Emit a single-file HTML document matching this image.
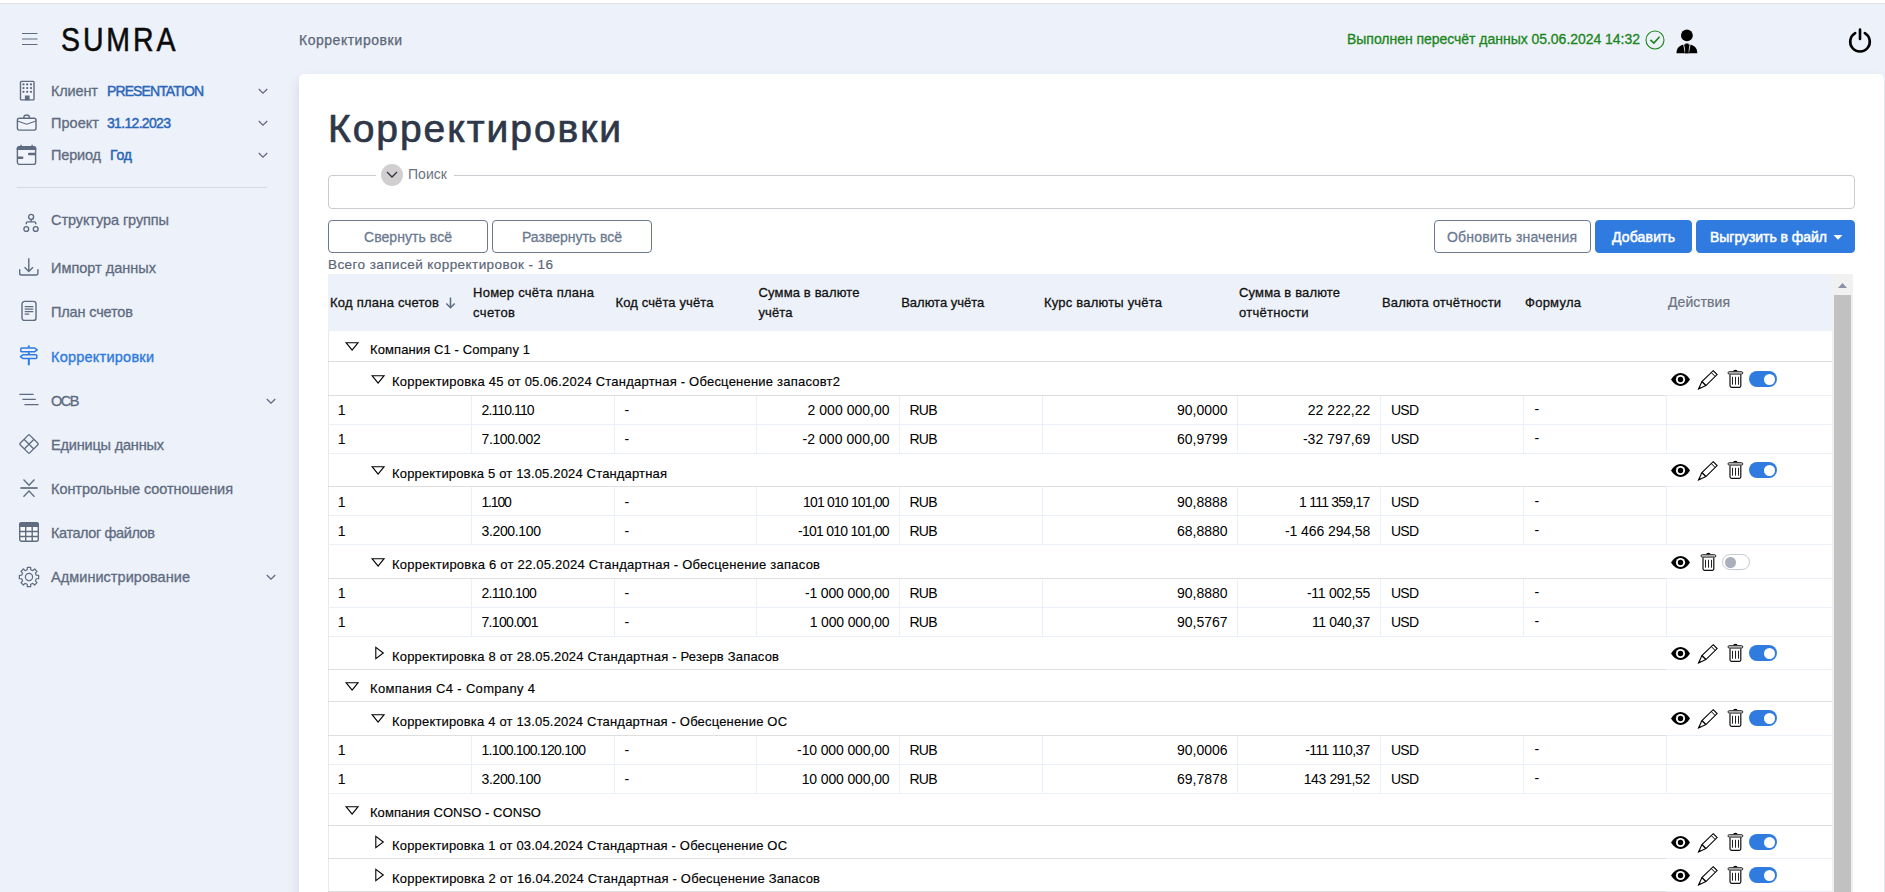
<!DOCTYPE html><html lang="ru"><head><meta charset="utf-8"><title>Корректировки</title><style>
*{box-sizing:border-box;margin:0;padding:0}
html,body{width:1885px;height:892px;overflow:hidden}
body{background:#edf1f9;font-family:"Liberation Sans",sans-serif;position:relative;color:#000}
.t{position:absolute;white-space:nowrap;font-size:14px}
.abs{position:absolute}
.topstrip{position:absolute;left:0;top:0;width:1885px;height:3px;background:#fff}
.topline{position:absolute;left:0;top:3px;width:1885px;height:1px;background:#e0e0de}
.card{position:absolute;left:299px;top:74px;width:1585px;height:830px;background:#fff;border-radius:5px 5px 0 0;box-shadow:0 6px 12px rgba(90,105,135,.2)}
.logo{font-size:33.5px;letter-spacing:3.4px;color:#0b0b0b;-webkit-text-stroke:.55px #0b0b0b;transform:scaleX(.85);transform-origin:0 50%}
.crumb{color:#5b6678;font-size:14px;-webkit-text-stroke:.25px #5b6678}
.status{color:#1a851a;font-size:14px;-webkit-text-stroke:.3px #1a851a}
.sl{color:#5e6b80;font-size:14.5px;-webkit-text-stroke:.3px #5e6b80}
.sv{color:#2a66b8;font-size:14px;-webkit-text-stroke:.45px #2a66b8}
.mi{color:#5e6b80;font-size:14.5px;-webkit-text-stroke:.3px #5e6b80}
.mi.act{color:#2f7be0;-webkit-text-stroke:.35px #2f7be0}
.h1{font-size:39px;color:#2d3748;-webkit-text-stroke:.7px #2d3748}
.leg{color:#6b7280;font-size:14px}
.btn{position:absolute;top:220px;height:32.600px;border-radius:4px;border:1px solid #6b7a90;background:#fff}
.btn.blue{background:#2f7be0;border-color:#2f7be0}
.bt{color:#6b7a90;font-size:14px;-webkit-text-stroke:.3px #6b7a90}
.bw{color:#fff;font-size:14px;-webkit-text-stroke:.5px #fff}
.cnt{color:#5b6678;font-size:13.5px;-webkit-text-stroke:.2px #5b6678}
.th{color:#111;font-size:13px;-webkit-text-stroke:.3px #111}
.thg{color:#6b7280;font-size:14px;-webkit-text-stroke:.2px #6b7280}
.td{color:#000;font-size:14px}
.gr{color:#000;font-size:13px;-webkit-text-stroke:.15px #000}
.hl{position:absolute;height:1px;background:#e6ebf5}
.hl2{position:absolute;height:1px;background:#dcdfe4}
.vl{position:absolute;width:1px;background:#e6ebf5}
svg{position:absolute;overflow:visible}
</style></head><body>
<div class="topstrip"></div><div class="topline"></div>
<svg style="left:22px;top:31px" width="16" height="16" viewBox="0 0 16 16"><path d="M0 2.5h15.5M0 8h15.5M0 13.5h15.5" stroke="#5e6b80" stroke-width="1.2" fill="none"/></svg>
<span id="t1" class="t logo" style="top:19.80px;line-height:40px;left:61.00px;">SUMRA</span>
<span id="t2" class="t crumb" style="top:30.00px;line-height:20px;left:299.00px;letter-spacing:0.518px;">Корректировки</span>
<span id="t3" class="t status" style="top:29.00px;line-height:20px;left:1347.00px;letter-spacing:-0.032px;">Выполнен пересчёт данных 05.06.2024 14:32</span>
<svg style="left:1645px;top:29.500px" width="20" height="20" viewBox="0 0 20 20"><circle cx="10" cy="10" r="9" fill="none" stroke="#1a851a" stroke-width="1.100"/><path d="M5.400 9.800l3.500 3.300 5.700-6.300" fill="none" stroke="#1a851a" stroke-width="1.600"/></svg>
<svg style="left:1675.500px;top:28.500px" width="22" height="25" viewBox="0 0 22 25"><circle cx="10.900" cy="6.400" r="5.900" fill="#000"/><path d="M0.500 24.300c0-5 2.500-8.600 10.400-9.300 7.900 0.700 10.400 4.300 10.400 9.300z" fill="#000"/><path d="M7.600 15.100l1.700 8.800M14.200 15.100l-1.700 8.800" stroke="#edf1f9" stroke-width="0.900" fill="none"/><path d="M9.300 14.600h3.200l-0.700 2.200 1 7.500h-3.800l1-7.500z" fill="#000"/></svg>
<svg style="left:1848px;top:27px" width="24" height="25" viewBox="0 0 24 25"><path d="M7.200 6.200A9.800 9.800 0 1 0 16.800 6.200" fill="none" stroke="#000" stroke-width="2.600" stroke-linecap="round"/><path d="M12 2.500v9.500" stroke="#000" stroke-width="2.600" stroke-linecap="round"/></svg>
<svg style="left:19px;top:80.400px" width="17" height="21" viewBox="0 0 17 21"><rect x="1.500" y="1.400" width="13.500" height="18.500" rx="0.800" fill="#f1f4fa" stroke="#5e6b80" stroke-width="1.400"/><circle cx="4.5" cy="4.4" r="1.150" fill="#5e6b80"/><circle cx="4.5" cy="8.1" r="1.150" fill="#5e6b80"/><circle cx="4.5" cy="11.8" r="1.150" fill="#5e6b80"/><circle cx="8.2" cy="4.4" r="1.150" fill="#5e6b80"/><circle cx="8.2" cy="8.1" r="1.150" fill="#5e6b80"/><circle cx="8.2" cy="11.8" r="1.150" fill="#5e6b80"/><circle cx="12.0" cy="4.4" r="1.150" fill="#5e6b80"/><circle cx="12.0" cy="8.1" r="1.150" fill="#5e6b80"/><circle cx="12.0" cy="11.8" r="1.150" fill="#5e6b80"/><rect x="5.900" y="15.500" width="4.700" height="4.800" fill="#5e6b80"/></svg>
<span id="t4" class="t sl" style="top:81.00px;line-height:20px;left:51.00px;letter-spacing:-0.146px;">Клиент</span>
<span id="t5" class="t sv" style="top:81.00px;line-height:20px;left:107.00px;letter-spacing:-0.893px;">PRESENTATION</span>
<svg style="left:258px;top:88px" width="10" height="7" viewBox="0 0 10 7"><path d="M0.800 1l4.200 4.200L9.200 1" fill="none" stroke="#5e6b80" stroke-width="1.300"/></svg>
<svg style="left:16.300px;top:113.900px" width="21" height="18" viewBox="0 0 21 18"><g fill="none" stroke="#5e6b80" stroke-width="1.400"><path d="M8 4.200V2.600a1.300 1.300 0 0 1 1.300-1.300h2.600a1.300 1.300 0 0 1 1.300 1.300v1.600"/><rect x="1.400" y="4.200" width="18.600" height="11.900" rx="1.800" fill="#f1f4fa"/><path d="M1.400 7l9.300 3.200 9.300-3.200" stroke-width="1.200"/></g></svg>
<span id="t6" class="t sl" style="top:113.00px;line-height:20px;left:51.00px;letter-spacing:0.047px;">Проект</span>
<span id="t7" class="t sv" style="top:113.00px;line-height:20px;left:107.00px;letter-spacing:-0.675px;">31.12.2023</span>
<svg style="left:258px;top:120px" width="10" height="7" viewBox="0 0 10 7"><path d="M0.800 1l4.200 4.200L9.200 1" fill="none" stroke="#5e6b80" stroke-width="1.300"/></svg>
<svg style="left:16.300px;top:144px" width="21" height="22" viewBox="0 0 21 22"><rect x="1.400" y="2.600" width="18.200" height="17.800" rx="2.200" fill="#f1f4fa" stroke="#5e6b80" stroke-width="1.400"/><path d="M0.700 4.700a2.800 2.800 0 0 1 2.800-2.800h14a2.800 2.800 0 0 1 2.800 2.800v1.300H0.700z" fill="#5e6b80"/><path d="M5 0.700v2M16.100 0.700v2" stroke="#5e6b80" stroke-width="1.400"/><rect x="12" y="8.800" width="7.600" height="2.400" rx="1" fill="#5e6b80"/><rect x="1.400" y="12.400" width="6" height="2.500" rx="1" fill="#5e6b80"/></svg>
<span id="t8" class="t sl" style="top:145.00px;line-height:20px;left:51.00px;letter-spacing:-0.172px;">Период</span>
<span id="t9" class="t sv" style="top:145.00px;line-height:20px;left:110.00px;letter-spacing:-0.147px;">Год</span>
<svg style="left:258px;top:152px" width="10" height="7" viewBox="0 0 10 7"><path d="M0.800 1l4.200 4.200L9.200 1" fill="none" stroke="#5e6b80" stroke-width="1.300"/></svg>
<div class="abs" style="left:17px;top:187px;width:250px;height:1px;background:#d3d9e6"></div>
<svg style="left:23px;top:213px" width="16" height="20" viewBox="0 0 16 20"><g fill="none" stroke="#5e6b80" stroke-width="1.400"><circle cx="8.100" cy="3.900" r="2.500"/><circle cx="3.300" cy="16" r="2.400"/><circle cx="12.700" cy="16" r="2.400"/><path d="M8.100 6.500v2.400M3.300 11.200v-1.300a1 1 0 0 1 1-1h7.400a1 1 0 0 1 1 1v1.300"/></g></svg>
<span id="t10" class="t mi" style="top:210.00px;line-height:20px;left:51.00px;letter-spacing:-0.093px;">Структура группы</span>
<svg style="left:18px;top:257px" width="22" height="20" viewBox="0 0 22 20"><g fill="none" stroke="#5e6b80" stroke-width="1.400"><path d="M10.800 1.200v13M6.600 10.200l4.200 4.200 4.200-4.200"/><path d="M1.700 12.200v4a1.800 1.800 0 0 0 1.800 1.800h14.600a1.800 1.800 0 0 0 1.800-1.800v-4"/></g></svg>
<span id="t11" class="t mi" style="top:258.00px;line-height:20px;left:51.00px;letter-spacing:0.005px;">Импорт данных</span>
<svg style="left:21px;top:300px" width="16" height="22" viewBox="0 0 16 22"><rect x="1" y="1.400" width="14" height="19" rx="2.500" fill="none" stroke="#5e6b80" stroke-width="1.400"/><path d="M3.700 6.600h8.600M3.700 9.100h8.600M3.700 11.600h8.600M3.700 14.100h4.500" stroke="#5e6b80" stroke-width="1.300"/></svg>
<span id="t12" class="t mi" style="top:302.00px;line-height:20px;left:51.00px;letter-spacing:-0.147px;">План счетов</span>
<svg style="left:19px;top:345px" width="20" height="21" viewBox="0 0 20 21"><path d="M9.800 0.600v2M9.800 7.200v2M9.800 13.800v6.500" stroke="#2f7be0" stroke-width="2"/><g fill="none" stroke="#2f7be0" stroke-width="1.500" stroke-linejoin="round"><path d="M2.600 3.100h13.200l2.400 1.800-2.400 1.800H2.600a0.800 0.800 0 0 1-0.800-0.800V3.900a0.800 0.800 0 0 1 0.800-0.800z"/><path d="M17 9.800H3.800L1.400 11.600l2.400 1.800H17a0.800 0.800 0 0 0 0.800-0.800v-2a0.800 0.800 0 0 0-0.800-0.800z"/></g></svg>
<span id="t13" class="t mi act" style="top:347.00px;line-height:20px;left:51.00px;letter-spacing:0.231px;">Корректировки</span>
<svg style="left:19px;top:393px" width="20" height="14" viewBox="0 0 20 14"><path d="M0.400 1.400h14.200M3.400 6.400h13.400M5.500 11.600h14" stroke="#5e6b80" stroke-width="1.300" fill="none"/></svg>
<span id="t14" class="t mi" style="top:391.00px;line-height:20px;left:51.00px;letter-spacing:-1.468px;">ОСВ</span>
<svg style="left:266px;top:398px" width="10" height="7" viewBox="0 0 10 7"><path d="M0.800 1l4.200 4.200L9.200 1" fill="none" stroke="#5e6b80" stroke-width="1.300"/></svg>
<svg style="left:18px;top:433px" width="22" height="22" viewBox="0 0 22 22"><path d="M10.300 2.100a1 1 0 0 1 1.400 0l8.200 8.200a1 1 0 0 1 0 1.400l-8.200 8.200a1 1 0 0 1-1.400 0l-8.200-8.200a1 1 0 0 1 0-1.400z" fill="none" stroke="#5e6b80" stroke-width="1.300"/><path d="M6 6.200l9.800 9.800M16 6.200l-9.800 9.800" stroke="#5e6b80" stroke-width="1.300"/></svg>
<span id="t15" class="t mi" style="top:435.00px;line-height:20px;left:51.00px;letter-spacing:-0.178px;">Единицы данных</span>
<svg style="left:19px;top:478px" width="20" height="20" viewBox="0 0 20 20"><path d="M1.400 10h17.200" stroke="#5e6b80" stroke-width="1.700"/><path d="M4.500 1.500l5.500 5.700 5.500-5.700M4.500 18.700l5.500-5.700 5.500 5.700" fill="none" stroke="#5e6b80" stroke-width="1.300"/></svg>
<span id="t16" class="t mi" style="top:479.00px;line-height:20px;left:51.00px;letter-spacing:-0.050px;">Контрольные соотношения</span>
<svg style="left:19px;top:522px" width="20" height="20" viewBox="0 0 20 20"><rect x="0.700" y="0.700" width="18.600" height="18.600" rx="2" fill="#f7f9fd" stroke="#5e6b80" stroke-width="1.400"/><path d="M0.100 2.700a2.600 2.600 0 0 1 2.600-2.600h14.600a2.600 2.600 0 0 1 2.600 2.600v2.200H0.100z" fill="#5e6b80"/><path d="M0.700 9.500h18.600M0.700 14.500h18.600M6.700 4.500v14.800M13.200 4.500v14.800" stroke="#5e6b80" stroke-width="1.400"/></svg>
<span id="t17" class="t mi" style="top:523.00px;line-height:20px;left:51.00px;letter-spacing:-0.403px;">Каталог файлов</span>
<svg style="left:18px;top:566px" width="22" height="22" viewBox="0 0 22 22"><path d="M9.25 3.71L9.32 1.35L12.68 1.35L12.75 3.71L14.92 4.61L16.64 2.98L19.02 5.36L17.39 7.08L18.29 9.25L20.65 9.32L20.65 12.68L18.29 12.75L17.39 14.92L19.02 16.64L16.64 19.02L14.92 17.39L12.75 18.29L12.68 20.65L9.32 20.65L9.25 18.29L7.08 17.39L5.36 19.02L2.98 16.64L4.61 14.92L3.71 12.75L1.35 12.68L1.35 9.32L3.71 9.25L4.61 7.08L2.98 5.36L5.36 2.98L7.08 4.61z" fill="none" stroke="#5e6b80" stroke-width="1.200" stroke-linejoin="round"/><circle cx="11" cy="11" r="3.600" fill="none" stroke="#5e6b80" stroke-width="1.200"/></svg>
<span id="t18" class="t mi" style="top:567.00px;line-height:20px;left:51.00px;letter-spacing:0.045px;">Администрирование</span>
<svg style="left:266px;top:574px" width="10" height="7" viewBox="0 0 10 7"><path d="M0.800 1l4.200 4.200L9.200 1" fill="none" stroke="#5e6b80" stroke-width="1.300"/></svg>
<div class="card"></div>
<span id="t19" class="t h1" style="top:104.50px;line-height:48px;left:328.00px;letter-spacing:1.952px;">Корректировки</span>
<div class="abs" style="left:328px;top:175px;width:1527px;height:34px;border:1px solid #c9cbd0;border-radius:4px"></div>
<div class="abs" style="left:376px;top:170px;width:78px;height:10px;background:#fff"></div>
<div class="abs" style="left:381px;top:163.500px;width:22px;height:22px;border-radius:50%;background:#d2cfd0"></div>
<svg style="left:386px;top:171px" width="12" height="8" viewBox="0 0 12 8"><path d="M1 1l5 5 5-5" fill="none" stroke="#2d3340" stroke-width="1.300"/></svg>
<span id="t20" class="t leg" style="top:164.00px;line-height:20px;left:408.00px;letter-spacing:0.048px;">Поиск</span>
<div class="btn" style="left:328px;width:160px"></div>
<span id="t21" class="t bt" style="top:227.00px;line-height:20px;left:364.00px;letter-spacing:0.058px;">Свернуть всё</span>
<div class="btn" style="left:492px;width:160px"></div>
<span id="t22" class="t bt" style="top:227.00px;line-height:20px;left:522.00px;letter-spacing:-0.014px;">Развернуть всё</span>
<div class="btn" style="left:1434px;width:157px"></div>
<span id="t23" class="t bt" style="top:227.00px;line-height:20px;left:1447.00px;letter-spacing:0.180px;">Обновить значения</span>
<div class="btn blue" style="left:1595px;width:97px"></div>
<span id="t24" class="t bw" style="top:227.00px;line-height:20px;left:1612.00px;letter-spacing:0.159px;">Добавить</span>
<div class="btn blue" style="left:1696px;width:159px"></div>
<span id="t25" class="t bw" style="top:227.00px;line-height:20px;left:1710.00px;letter-spacing:-0.040px;">Выгрузить в файл</span>
<svg style="left:1833px;top:234.500px" width="10" height="5" viewBox="0 0 10 5"><path d="M0.500 0h9L5 4.800z" fill="#fff"/></svg>
<span id="t26" class="t cnt" style="top:254.80px;line-height:20px;left:328.00px;letter-spacing:0.432px;">Всего записей корректировок - 16</span>
<div class="abs" style="left:328px;top:274px;width:1504px;height:57px;background:#edf1f9"></div>
<div class="abs" style="left:1832px;top:274px;width:21px;height:640px;background:#f1f1f1"></div>
<div class="abs" style="left:1834px;top:295px;width:17px;height:620px;background:#c1c1c1"></div>
<svg style="left:1838px;top:283px" width="9" height="5" viewBox="0 0 9 5"><path d="M4.500 0L9 5H0z" fill="#8a93a5"/></svg>
<span id="t27" class="t th" style="top:292.50px;line-height:20px;left:330.00px;letter-spacing:0.235px;">Код плана счетов</span>
<svg style="left:445px;top:297px" width="11" height="12" viewBox="0 0 11 12"><path d="M5.500 0.500v10M1.300 6.500l4.200 4.200 4.200-4.200" fill="none" stroke="#5e6b80" stroke-width="1.500"/></svg>
<span id="t28" class="t th" style="top:283.00px;line-height:20px;left:473.00px;letter-spacing:0.256px;">Номер счёта плана</span>
<span id="t29" class="t th" style="top:302.50px;line-height:20px;left:473.00px;letter-spacing:0.424px;">счетов</span>
<span id="t30" class="t th" style="top:292.50px;line-height:20px;left:615.50px;letter-spacing:0.124px;">Код счёта учёта</span>
<span id="t31" class="t th" style="top:283.00px;line-height:20px;left:758.50px;letter-spacing:0.149px;">Сумма в валюте</span>
<span id="t32" class="t th" style="top:302.50px;line-height:20px;left:758.50px;letter-spacing:0.111px;">учёта</span>
<span id="t33" class="t th" style="top:292.50px;line-height:20px;left:901.20px;letter-spacing:-0.014px;">Валюта учёта</span>
<span id="t34" class="t th" style="top:292.50px;line-height:20px;left:1044.00px;letter-spacing:0.202px;">Курс валюты учёта</span>
<span id="t35" class="t th" style="top:283.00px;line-height:20px;left:1239.00px;letter-spacing:0.149px;">Сумма в валюте</span>
<span id="t36" class="t th" style="top:302.50px;line-height:20px;left:1239.00px;letter-spacing:0.279px;">отчётности</span>
<span id="t37" class="t th" style="top:292.50px;line-height:20px;left:1382.00px;letter-spacing:0.151px;">Валюта отчётности</span>
<span id="t38" class="t th" style="top:292.50px;line-height:20px;left:1525.00px;letter-spacing:0.256px;">Формула</span>
<span id="t39" class="t thg" style="top:291.70px;line-height:20px;left:1668.00px;letter-spacing:0.094px;">Действия</span>
<div class="abs" style="left:328px;top:331px;width:1px;height:570px;background:#e4e9f4"></div>
<svg style="left:344.6px;top:342.1px" width="14" height="10" viewBox="0 0 14 10"><path d="M1.200 0.750h11.800L7.100 8.150z" fill="none" stroke="#000" stroke-width="1.200" stroke-linejoin="miter"/></svg>
<span id="t40" class="t gr" style="top:339.80px;line-height:20px;left:370.00px;letter-spacing:0.102px;">Компания C1 - Company 1</span>
<div class="abs" style="left:328px;top:361px;width:1338px;height:1px;background:#dedede"></div>
<div class="abs" style="left:1666px;top:361px;width:166px;height:1px;background:#dedede"></div>
<svg style="left:371.4px;top:374.9px" width="14" height="10" viewBox="0 0 14 10"><path d="M1.200 0.750h11.800L7.100 8.150z" fill="none" stroke="#000" stroke-width="1.200" stroke-linejoin="miter"/></svg>
<span id="t41" class="t gr" style="top:371.80px;line-height:20px;left:392.00px;letter-spacing:0.218px;">Корректировка 45 от 05.06.2024 Стандартная - Обесценение запасовт2</span>
<svg style="left:1671.1px;top:373.0px" width="19" height="13" viewBox="0 0 19 13"><path d="M0 6.500C2.500 2.300 5.800 0 9.500 0s7 2.300 9.500 6.500C16.500 10.700 13.200 13 9.500 13S2.500 10.700 0 6.500z" fill="#000"/><circle cx="9.500" cy="6.500" r="4.600" fill="#fff"/><circle cx="9.500" cy="6.500" r="2.700" fill="#000"/></svg>
<svg style="left:1697.7px;top:369.6px" width="20" height="20" viewBox="0 0 20 20"><path d="M15.200 0.700L19.100 4.600 7.900 15.600 0.600 19 3.900 11.600z" fill="#fff" stroke="#000" stroke-width="1.100" stroke-linejoin="miter"/><path d="M13.300 2.600l3.900 3.900" stroke="#000" stroke-width="1"/><path d="M3.900 11.600l4 4" stroke="#000" stroke-width="1.400"/><path d="M0.600 19l0.900-2.100 1.200 1.200z" fill="#000" stroke="#000" stroke-width="0.500"/></svg>
<svg style="left:1727.0px;top:369.0px" width="17" height="20" viewBox="0 0 17 20"><path d="M6.100 2.500a2.300 1.800 0 0 1 4.600 0z" fill="#000"/><path d="M3 5.500v11.300a1.500 1.500 0 0 0 1.500 1.500h7.800a1.500 1.500 0 0 0 1.500-1.500V5.500" fill="#fff" stroke="#111" stroke-width="1.200"/><rect x="1" y="2.700" width="14.800" height="2.400" rx="1.200" fill="#d0d0d0" stroke="#222" stroke-width="1"/><path d="M5.500 7.800v7.900M8.500 7.800v7.900M11.500 7.800v7.900" stroke="#222" stroke-width="1"/></svg>
<div class="abs" style="left:1749.0px;top:371.2px;width:28px;height:16px;border-radius:8px;background:#2f7be0"></div>
<div class="abs" style="left:1763.5px;top:373.7px;width:11px;height:11px;border-radius:50%;background:#fff"></div>
<div class="abs" style="left:328px;top:395px;width:1338px;height:1px;background:#dedede"></div>
<div class="abs" style="left:1666px;top:395px;width:166px;height:1px;background:#ebeff8"></div>
<span id="t42" class="t td" style="top:400.45px;line-height:20px;left:337.80px;">1</span>
<span id="t43" class="t td" style="top:400.45px;line-height:20px;left:481.50px;letter-spacing:-0.890px;">2.110.110</span>
<span id="t44" class="t td" style="top:400.45px;line-height:20px;left:624.50px;">-</span>
<span id="t45" class="t td" style="top:400.45px;line-height:20px;right:995.38px;letter-spacing:0.023px;">2 000 000,00</span>
<span id="t46" class="t td" style="top:400.45px;line-height:20px;left:909.50px;letter-spacing:-0.781px;">RUB</span>
<span id="t47" class="t td" style="top:400.45px;line-height:20px;right:657.39px;letter-spacing:0.015px;">90,0000</span>
<span id="t48" class="t td" style="top:400.45px;line-height:20px;right:514.68px;letter-spacing:0.025px;">22 222,22</span>
<span id="t49" class="t td" style="top:400.45px;line-height:20px;left:1391.00px;letter-spacing:-0.781px;">USD</span>
<span id="t50" class="t td" style="top:398.65px;line-height:20px;left:1534.50px;">-</span>
<div class="abs" style="left:471px;top:396px;width:1px;height:28px;background:#ebeff8"></div>
<div class="abs" style="left:614px;top:396px;width:1px;height:28px;background:#ebeff8"></div>
<div class="abs" style="left:756px;top:396px;width:1px;height:28px;background:#ebeff8"></div>
<div class="abs" style="left:899px;top:396px;width:1px;height:28px;background:#ebeff8"></div>
<div class="abs" style="left:1042px;top:396px;width:1px;height:28px;background:#ebeff8"></div>
<div class="abs" style="left:1237px;top:396px;width:1px;height:28px;background:#ebeff8"></div>
<div class="abs" style="left:1380px;top:396px;width:1px;height:28px;background:#ebeff8"></div>
<div class="abs" style="left:1523px;top:396px;width:1px;height:28px;background:#ebeff8"></div>
<div class="abs" style="left:1666px;top:396px;width:1px;height:28px;background:#ebeff8"></div>
<div class="abs" style="left:328px;top:424px;width:1338px;height:1px;background:#ebeff8"></div>
<div class="abs" style="left:1666px;top:424px;width:166px;height:1px;background:#ebeff8"></div>
<span id="t51" class="t td" style="top:429.45px;line-height:20px;left:337.80px;">1</span>
<span id="t52" class="t td" style="top:429.45px;line-height:20px;left:481.50px;letter-spacing:-0.387px;">7.100.002</span>
<span id="t53" class="t td" style="top:429.45px;line-height:20px;left:624.50px;">-</span>
<span id="t54" class="t td" style="top:429.45px;line-height:20px;right:995.33px;letter-spacing:0.066px;">-2 000 000,00</span>
<span id="t55" class="t td" style="top:429.45px;line-height:20px;left:909.50px;letter-spacing:-0.781px;">RUB</span>
<span id="t56" class="t td" style="top:429.45px;line-height:20px;right:657.39px;letter-spacing:0.015px;">60,9799</span>
<span id="t57" class="t td" style="top:429.45px;line-height:20px;right:514.65px;letter-spacing:0.050px;">-32 797,69</span>
<span id="t58" class="t td" style="top:429.45px;line-height:20px;left:1391.00px;letter-spacing:-0.781px;">USD</span>
<span id="t59" class="t td" style="top:427.65px;line-height:20px;left:1534.50px;">-</span>
<div class="abs" style="left:471px;top:425px;width:1px;height:28px;background:#ebeff8"></div>
<div class="abs" style="left:614px;top:425px;width:1px;height:28px;background:#ebeff8"></div>
<div class="abs" style="left:756px;top:425px;width:1px;height:28px;background:#ebeff8"></div>
<div class="abs" style="left:899px;top:425px;width:1px;height:28px;background:#ebeff8"></div>
<div class="abs" style="left:1042px;top:425px;width:1px;height:28px;background:#ebeff8"></div>
<div class="abs" style="left:1237px;top:425px;width:1px;height:28px;background:#ebeff8"></div>
<div class="abs" style="left:1380px;top:425px;width:1px;height:28px;background:#ebeff8"></div>
<div class="abs" style="left:1523px;top:425px;width:1px;height:28px;background:#ebeff8"></div>
<div class="abs" style="left:1666px;top:425px;width:1px;height:28px;background:#ebeff8"></div>
<div class="abs" style="left:328px;top:453px;width:1338px;height:1px;background:#ebeff8"></div>
<div class="abs" style="left:1666px;top:453px;width:166px;height:1px;background:#ebeff8"></div>
<svg style="left:371.4px;top:465.7px" width="14" height="10" viewBox="0 0 14 10"><path d="M1.200 0.750h11.800L7.100 8.150z" fill="none" stroke="#000" stroke-width="1.200" stroke-linejoin="miter"/></svg>
<span id="t60" class="t gr" style="top:463.80px;line-height:20px;left:392.00px;letter-spacing:0.162px;">Корректировка 5 от 13.05.2024 Стандартная</span>
<svg style="left:1671.1px;top:464.0px" width="19" height="13" viewBox="0 0 19 13"><path d="M0 6.500C2.500 2.300 5.800 0 9.500 0s7 2.300 9.500 6.500C16.500 10.700 13.200 13 9.500 13S2.500 10.700 0 6.500z" fill="#000"/><circle cx="9.500" cy="6.500" r="4.600" fill="#fff"/><circle cx="9.500" cy="6.500" r="2.700" fill="#000"/></svg>
<svg style="left:1697.7px;top:460.6px" width="20" height="20" viewBox="0 0 20 20"><path d="M15.200 0.700L19.100 4.600 7.900 15.600 0.600 19 3.900 11.600z" fill="#fff" stroke="#000" stroke-width="1.100" stroke-linejoin="miter"/><path d="M13.300 2.600l3.900 3.900" stroke="#000" stroke-width="1"/><path d="M3.900 11.600l4 4" stroke="#000" stroke-width="1.400"/><path d="M0.600 19l0.900-2.100 1.200 1.200z" fill="#000" stroke="#000" stroke-width="0.500"/></svg>
<svg style="left:1727.0px;top:460.0px" width="17" height="20" viewBox="0 0 17 20"><path d="M6.100 2.500a2.300 1.800 0 0 1 4.600 0z" fill="#000"/><path d="M3 5.500v11.300a1.500 1.500 0 0 0 1.500 1.500h7.800a1.500 1.500 0 0 0 1.500-1.500V5.500" fill="#fff" stroke="#111" stroke-width="1.200"/><rect x="1" y="2.700" width="14.800" height="2.400" rx="1.200" fill="#d0d0d0" stroke="#222" stroke-width="1"/><path d="M5.500 7.800v7.900M8.500 7.800v7.900M11.500 7.800v7.900" stroke="#222" stroke-width="1"/></svg>
<div class="abs" style="left:1749.0px;top:462.2px;width:28px;height:16px;border-radius:8px;background:#2f7be0"></div>
<div class="abs" style="left:1763.5px;top:464.7px;width:11px;height:11px;border-radius:50%;background:#fff"></div>
<div class="abs" style="left:328px;top:486px;width:1338px;height:1px;background:#dedede"></div>
<div class="abs" style="left:1666px;top:486px;width:166px;height:1px;background:#ebeff8"></div>
<span id="t61" class="t td" style="top:492.45px;line-height:20px;left:337.80px;">1</span>
<span id="t62" class="t td" style="top:492.45px;line-height:20px;left:481.50px;letter-spacing:-1.184px;">1.100</span>
<span id="t63" class="t td" style="top:492.45px;line-height:20px;left:624.50px;">-</span>
<span id="t64" class="t td" style="top:492.45px;line-height:20px;right:996.23px;letter-spacing:-0.825px;">101 010 101,00</span>
<span id="t65" class="t td" style="top:492.45px;line-height:20px;left:909.50px;letter-spacing:-0.781px;">RUB</span>
<span id="t66" class="t td" style="top:492.45px;line-height:20px;right:657.39px;letter-spacing:0.015px;">90,8888</span>
<span id="t67" class="t td" style="top:492.45px;line-height:20px;right:515.46px;letter-spacing:-0.761px;">1 111 359,17</span>
<span id="t68" class="t td" style="top:492.45px;line-height:20px;left:1391.00px;letter-spacing:-0.781px;">USD</span>
<span id="t69" class="t td" style="top:490.65px;line-height:20px;left:1534.50px;">-</span>
<div class="abs" style="left:471px;top:487px;width:1px;height:28px;background:#ebeff8"></div>
<div class="abs" style="left:614px;top:487px;width:1px;height:28px;background:#ebeff8"></div>
<div class="abs" style="left:756px;top:487px;width:1px;height:28px;background:#ebeff8"></div>
<div class="abs" style="left:899px;top:487px;width:1px;height:28px;background:#ebeff8"></div>
<div class="abs" style="left:1042px;top:487px;width:1px;height:28px;background:#ebeff8"></div>
<div class="abs" style="left:1237px;top:487px;width:1px;height:28px;background:#ebeff8"></div>
<div class="abs" style="left:1380px;top:487px;width:1px;height:28px;background:#ebeff8"></div>
<div class="abs" style="left:1523px;top:487px;width:1px;height:28px;background:#ebeff8"></div>
<div class="abs" style="left:1666px;top:487px;width:1px;height:28px;background:#ebeff8"></div>
<div class="abs" style="left:328px;top:515px;width:1338px;height:1px;background:#ebeff8"></div>
<div class="abs" style="left:1666px;top:515px;width:166px;height:1px;background:#ebeff8"></div>
<span id="t70" class="t td" style="top:521.45px;line-height:20px;left:337.80px;">1</span>
<span id="t71" class="t td" style="top:521.45px;line-height:20px;left:481.50px;letter-spacing:-0.350px;">3.200.100</span>
<span id="t72" class="t td" style="top:521.45px;line-height:20px;left:624.50px;">-</span>
<span id="t73" class="t td" style="top:521.45px;line-height:20px;right:996.14px;letter-spacing:-0.742px;">-101 010 101,00</span>
<span id="t74" class="t td" style="top:521.45px;line-height:20px;left:909.50px;letter-spacing:-0.781px;">RUB</span>
<span id="t75" class="t td" style="top:521.45px;line-height:20px;right:657.39px;letter-spacing:0.015px;">68,8880</span>
<span id="t76" class="t td" style="top:521.45px;line-height:20px;right:514.79px;letter-spacing:-0.093px;">-1 466 294,58</span>
<span id="t77" class="t td" style="top:521.45px;line-height:20px;left:1391.00px;letter-spacing:-0.781px;">USD</span>
<span id="t78" class="t td" style="top:519.65px;line-height:20px;left:1534.50px;">-</span>
<div class="abs" style="left:471px;top:516px;width:1px;height:28px;background:#ebeff8"></div>
<div class="abs" style="left:614px;top:516px;width:1px;height:28px;background:#ebeff8"></div>
<div class="abs" style="left:756px;top:516px;width:1px;height:28px;background:#ebeff8"></div>
<div class="abs" style="left:899px;top:516px;width:1px;height:28px;background:#ebeff8"></div>
<div class="abs" style="left:1042px;top:516px;width:1px;height:28px;background:#ebeff8"></div>
<div class="abs" style="left:1237px;top:516px;width:1px;height:28px;background:#ebeff8"></div>
<div class="abs" style="left:1380px;top:516px;width:1px;height:28px;background:#ebeff8"></div>
<div class="abs" style="left:1523px;top:516px;width:1px;height:28px;background:#ebeff8"></div>
<div class="abs" style="left:1666px;top:516px;width:1px;height:28px;background:#ebeff8"></div>
<div class="abs" style="left:328px;top:544px;width:1338px;height:1px;background:#ebeff8"></div>
<div class="abs" style="left:1666px;top:544px;width:166px;height:1px;background:#ebeff8"></div>
<svg style="left:371.4px;top:557.6px" width="14" height="10" viewBox="0 0 14 10"><path d="M1.200 0.750h11.800L7.100 8.150z" fill="none" stroke="#000" stroke-width="1.200" stroke-linejoin="miter"/></svg>
<span id="t79" class="t gr" style="top:554.80px;line-height:20px;left:392.00px;letter-spacing:0.231px;">Корректировка 6 от 22.05.2024 Стандартная - Обесценение запасов</span>
<svg style="left:1671.1px;top:556.0px" width="19" height="13" viewBox="0 0 19 13"><path d="M0 6.500C2.500 2.300 5.800 0 9.500 0s7 2.300 9.500 6.500C16.500 10.700 13.200 13 9.500 13S2.500 10.700 0 6.500z" fill="#000"/><circle cx="9.500" cy="6.500" r="4.600" fill="#fff"/><circle cx="9.500" cy="6.500" r="2.700" fill="#000"/></svg>
<svg style="left:1699.5px;top:552.0px" width="17" height="20" viewBox="0 0 17 20"><path d="M6.100 2.500a2.300 1.800 0 0 1 4.600 0z" fill="#000"/><path d="M3 5.500v11.300a1.500 1.500 0 0 0 1.500 1.500h7.800a1.500 1.500 0 0 0 1.500-1.500V5.500" fill="#fff" stroke="#111" stroke-width="1.200"/><rect x="1" y="2.700" width="14.800" height="2.400" rx="1.200" fill="#d0d0d0" stroke="#222" stroke-width="1"/><path d="M5.500 7.800v7.900M8.500 7.800v7.900M11.500 7.800v7.900" stroke="#222" stroke-width="1"/></svg>
<div class="abs" style="left:1722.0px;top:554.2px;width:28px;height:16px;border-radius:8px;background:#fff;border:1px solid #c5cad3"></div>
<div class="abs" style="left:1725.0px;top:557.0px;width:10.500px;height:10.500px;border-radius:50%;background:#aab0bb"></div>
<div class="abs" style="left:328px;top:578px;width:1338px;height:1px;background:#dedede"></div>
<div class="abs" style="left:1666px;top:578px;width:166px;height:1px;background:#ebeff8"></div>
<span id="t80" class="t td" style="top:583.45px;line-height:20px;left:337.80px;">1</span>
<span id="t81" class="t td" style="top:583.45px;line-height:20px;left:481.50px;letter-spacing:-0.744px;">2.110.100</span>
<span id="t82" class="t td" style="top:583.45px;line-height:20px;left:624.50px;">-</span>
<span id="t83" class="t td" style="top:583.45px;line-height:20px;right:995.54px;letter-spacing:-0.142px;">-1 000 000,00</span>
<span id="t84" class="t td" style="top:583.45px;line-height:20px;left:909.50px;letter-spacing:-0.781px;">RUB</span>
<span id="t85" class="t td" style="top:583.45px;line-height:20px;right:657.39px;letter-spacing:0.015px;">90,8880</span>
<span id="t86" class="t td" style="top:583.45px;line-height:20px;right:514.99px;letter-spacing:-0.290px;">-11 002,55</span>
<span id="t87" class="t td" style="top:583.45px;line-height:20px;left:1391.00px;letter-spacing:-0.781px;">USD</span>
<span id="t88" class="t td" style="top:581.65px;line-height:20px;left:1534.50px;">-</span>
<div class="abs" style="left:471px;top:579px;width:1px;height:28px;background:#ebeff8"></div>
<div class="abs" style="left:614px;top:579px;width:1px;height:28px;background:#ebeff8"></div>
<div class="abs" style="left:756px;top:579px;width:1px;height:28px;background:#ebeff8"></div>
<div class="abs" style="left:899px;top:579px;width:1px;height:28px;background:#ebeff8"></div>
<div class="abs" style="left:1042px;top:579px;width:1px;height:28px;background:#ebeff8"></div>
<div class="abs" style="left:1237px;top:579px;width:1px;height:28px;background:#ebeff8"></div>
<div class="abs" style="left:1380px;top:579px;width:1px;height:28px;background:#ebeff8"></div>
<div class="abs" style="left:1523px;top:579px;width:1px;height:28px;background:#ebeff8"></div>
<div class="abs" style="left:1666px;top:579px;width:1px;height:28px;background:#ebeff8"></div>
<div class="abs" style="left:328px;top:607px;width:1338px;height:1px;background:#ebeff8"></div>
<div class="abs" style="left:1666px;top:607px;width:166px;height:1px;background:#ebeff8"></div>
<span id="t89" class="t td" style="top:612.45px;line-height:20px;left:337.80px;">1</span>
<span id="t90" class="t td" style="top:612.45px;line-height:20px;left:481.50px;letter-spacing:-0.662px;">7.100.001</span>
<span id="t91" class="t td" style="top:612.45px;line-height:20px;left:624.50px;">-</span>
<span id="t92" class="t td" style="top:612.45px;line-height:20px;right:995.58px;letter-spacing:-0.177px;">1 000 000,00</span>
<span id="t93" class="t td" style="top:612.45px;line-height:20px;left:909.50px;letter-spacing:-0.781px;">RUB</span>
<span id="t94" class="t td" style="top:612.45px;line-height:20px;right:657.39px;letter-spacing:0.015px;">90,5767</span>
<span id="t95" class="t td" style="top:612.45px;line-height:20px;right:515.06px;letter-spacing:-0.356px;">11 040,37</span>
<span id="t96" class="t td" style="top:612.45px;line-height:20px;left:1391.00px;letter-spacing:-0.781px;">USD</span>
<span id="t97" class="t td" style="top:610.65px;line-height:20px;left:1534.50px;">-</span>
<div class="abs" style="left:471px;top:608px;width:1px;height:28px;background:#ebeff8"></div>
<div class="abs" style="left:614px;top:608px;width:1px;height:28px;background:#ebeff8"></div>
<div class="abs" style="left:756px;top:608px;width:1px;height:28px;background:#ebeff8"></div>
<div class="abs" style="left:899px;top:608px;width:1px;height:28px;background:#ebeff8"></div>
<div class="abs" style="left:1042px;top:608px;width:1px;height:28px;background:#ebeff8"></div>
<div class="abs" style="left:1237px;top:608px;width:1px;height:28px;background:#ebeff8"></div>
<div class="abs" style="left:1380px;top:608px;width:1px;height:28px;background:#ebeff8"></div>
<div class="abs" style="left:1523px;top:608px;width:1px;height:28px;background:#ebeff8"></div>
<div class="abs" style="left:1666px;top:608px;width:1px;height:28px;background:#ebeff8"></div>
<div class="abs" style="left:328px;top:636px;width:1338px;height:1px;background:#ebeff8"></div>
<div class="abs" style="left:1666px;top:636px;width:166px;height:1px;background:#ebeff8"></div>
<svg style="left:374.6px;top:646.4px" width="10" height="15" viewBox="0 0 10 15"><path d="M0.800 1.300v11.400L8.300 7z" fill="none" stroke="#000" stroke-width="1.100"/></svg>
<span id="t98" class="t gr" style="top:646.80px;line-height:20px;left:392.00px;letter-spacing:0.192px;">Корректировка 8 от 28.05.2024 Стандартная - Резерв Запасов</span>
<svg style="left:1671.1px;top:647.0px" width="19" height="13" viewBox="0 0 19 13"><path d="M0 6.500C2.500 2.300 5.800 0 9.500 0s7 2.300 9.500 6.500C16.500 10.700 13.200 13 9.500 13S2.500 10.700 0 6.500z" fill="#000"/><circle cx="9.500" cy="6.500" r="4.600" fill="#fff"/><circle cx="9.500" cy="6.500" r="2.700" fill="#000"/></svg>
<svg style="left:1697.7px;top:643.6px" width="20" height="20" viewBox="0 0 20 20"><path d="M15.200 0.700L19.100 4.600 7.900 15.600 0.600 19 3.900 11.600z" fill="#fff" stroke="#000" stroke-width="1.100" stroke-linejoin="miter"/><path d="M13.300 2.600l3.900 3.900" stroke="#000" stroke-width="1"/><path d="M3.900 11.600l4 4" stroke="#000" stroke-width="1.400"/><path d="M0.600 19l0.900-2.100 1.200 1.200z" fill="#000" stroke="#000" stroke-width="0.500"/></svg>
<svg style="left:1727.0px;top:643.0px" width="17" height="20" viewBox="0 0 17 20"><path d="M6.100 2.500a2.300 1.800 0 0 1 4.600 0z" fill="#000"/><path d="M3 5.500v11.300a1.500 1.500 0 0 0 1.500 1.500h7.800a1.500 1.500 0 0 0 1.500-1.500V5.500" fill="#fff" stroke="#111" stroke-width="1.200"/><rect x="1" y="2.700" width="14.800" height="2.400" rx="1.200" fill="#d0d0d0" stroke="#222" stroke-width="1"/><path d="M5.500 7.800v7.900M8.500 7.800v7.900M11.500 7.800v7.900" stroke="#222" stroke-width="1"/></svg>
<div class="abs" style="left:1749.0px;top:645.2px;width:28px;height:16px;border-radius:8px;background:#2f7be0"></div>
<div class="abs" style="left:1763.5px;top:647.7px;width:11px;height:11px;border-radius:50%;background:#fff"></div>
<div class="abs" style="left:328px;top:669px;width:1338px;height:1px;background:#dedede"></div>
<div class="abs" style="left:1666px;top:669px;width:166px;height:1px;background:#ebeff8"></div>
<svg style="left:344.6px;top:681.6px" width="14" height="10" viewBox="0 0 14 10"><path d="M1.200 0.750h11.800L7.100 8.150z" fill="none" stroke="#000" stroke-width="1.200" stroke-linejoin="miter"/></svg>
<span id="t99" class="t gr" style="top:678.80px;line-height:20px;left:370.00px;letter-spacing:0.329px;">Компания C4 - Company 4</span>
<div class="abs" style="left:328px;top:701px;width:1338px;height:1px;background:#dedede"></div>
<div class="abs" style="left:1666px;top:701px;width:166px;height:1px;background:#dedede"></div>
<svg style="left:371.4px;top:713.8px" width="14" height="10" viewBox="0 0 14 10"><path d="M1.200 0.750h11.800L7.100 8.150z" fill="none" stroke="#000" stroke-width="1.200" stroke-linejoin="miter"/></svg>
<span id="t100" class="t gr" style="top:711.80px;line-height:20px;left:392.00px;letter-spacing:0.177px;">Корректировка 4 от 13.05.2024 Стандартная - Обесценение ОС</span>
<svg style="left:1671.1px;top:712.0px" width="19" height="13" viewBox="0 0 19 13"><path d="M0 6.500C2.500 2.300 5.800 0 9.500 0s7 2.300 9.500 6.500C16.500 10.700 13.200 13 9.500 13S2.500 10.700 0 6.500z" fill="#000"/><circle cx="9.500" cy="6.500" r="4.600" fill="#fff"/><circle cx="9.500" cy="6.500" r="2.700" fill="#000"/></svg>
<svg style="left:1697.7px;top:708.6px" width="20" height="20" viewBox="0 0 20 20"><path d="M15.200 0.700L19.100 4.600 7.900 15.600 0.600 19 3.900 11.600z" fill="#fff" stroke="#000" stroke-width="1.100" stroke-linejoin="miter"/><path d="M13.300 2.600l3.900 3.900" stroke="#000" stroke-width="1"/><path d="M3.900 11.600l4 4" stroke="#000" stroke-width="1.400"/><path d="M0.600 19l0.900-2.100 1.200 1.200z" fill="#000" stroke="#000" stroke-width="0.500"/></svg>
<svg style="left:1727.0px;top:708.0px" width="17" height="20" viewBox="0 0 17 20"><path d="M6.100 2.500a2.300 1.800 0 0 1 4.600 0z" fill="#000"/><path d="M3 5.500v11.300a1.500 1.500 0 0 0 1.500 1.500h7.800a1.500 1.500 0 0 0 1.500-1.500V5.500" fill="#fff" stroke="#111" stroke-width="1.200"/><rect x="1" y="2.700" width="14.800" height="2.400" rx="1.200" fill="#d0d0d0" stroke="#222" stroke-width="1"/><path d="M5.500 7.800v7.900M8.500 7.800v7.900M11.500 7.800v7.900" stroke="#222" stroke-width="1"/></svg>
<div class="abs" style="left:1749.0px;top:710.2px;width:28px;height:16px;border-radius:8px;background:#2f7be0"></div>
<div class="abs" style="left:1763.5px;top:712.7px;width:11px;height:11px;border-radius:50%;background:#fff"></div>
<div class="abs" style="left:328px;top:735px;width:1338px;height:1px;background:#dedede"></div>
<div class="abs" style="left:1666px;top:735px;width:166px;height:1px;background:#ebeff8"></div>
<span id="t101" class="t td" style="top:740.45px;line-height:20px;left:337.80px;">1</span>
<span id="t102" class="t td" style="top:740.45px;line-height:20px;left:481.50px;letter-spacing:-0.768px;">1.100.100.120.100</span>
<span id="t103" class="t td" style="top:740.45px;line-height:20px;left:624.50px;">-</span>
<span id="t104" class="t td" style="top:740.45px;line-height:20px;right:995.53px;letter-spacing:-0.130px;">-10 000 000,00</span>
<span id="t105" class="t td" style="top:740.45px;line-height:20px;left:909.50px;letter-spacing:-0.781px;">RUB</span>
<span id="t106" class="t td" style="top:740.45px;line-height:20px;right:657.39px;letter-spacing:0.015px;">90,0006</span>
<span id="t107" class="t td" style="top:740.45px;line-height:20px;right:515.36px;letter-spacing:-0.662px;">-111 110,37</span>
<span id="t108" class="t td" style="top:740.45px;line-height:20px;left:1391.00px;letter-spacing:-0.781px;">USD</span>
<span id="t109" class="t td" style="top:738.65px;line-height:20px;left:1534.50px;">-</span>
<div class="abs" style="left:471px;top:736px;width:1px;height:28px;background:#ebeff8"></div>
<div class="abs" style="left:614px;top:736px;width:1px;height:28px;background:#ebeff8"></div>
<div class="abs" style="left:756px;top:736px;width:1px;height:28px;background:#ebeff8"></div>
<div class="abs" style="left:899px;top:736px;width:1px;height:28px;background:#ebeff8"></div>
<div class="abs" style="left:1042px;top:736px;width:1px;height:28px;background:#ebeff8"></div>
<div class="abs" style="left:1237px;top:736px;width:1px;height:28px;background:#ebeff8"></div>
<div class="abs" style="left:1380px;top:736px;width:1px;height:28px;background:#ebeff8"></div>
<div class="abs" style="left:1523px;top:736px;width:1px;height:28px;background:#ebeff8"></div>
<div class="abs" style="left:1666px;top:736px;width:1px;height:28px;background:#ebeff8"></div>
<div class="abs" style="left:328px;top:764px;width:1338px;height:1px;background:#ebeff8"></div>
<div class="abs" style="left:1666px;top:764px;width:166px;height:1px;background:#ebeff8"></div>
<span id="t110" class="t td" style="top:769.45px;line-height:20px;left:337.80px;">1</span>
<span id="t111" class="t td" style="top:769.45px;line-height:20px;left:481.50px;letter-spacing:-0.350px;">3.200.100</span>
<span id="t112" class="t td" style="top:769.45px;line-height:20px;left:624.50px;">-</span>
<span id="t113" class="t td" style="top:769.45px;line-height:20px;right:995.54px;letter-spacing:-0.136px;">10 000 000,00</span>
<span id="t114" class="t td" style="top:769.45px;line-height:20px;left:909.50px;letter-spacing:-0.781px;">RUB</span>
<span id="t115" class="t td" style="top:769.45px;line-height:20px;right:657.39px;letter-spacing:0.015px;">69,7878</span>
<span id="t116" class="t td" style="top:769.45px;line-height:20px;right:515.09px;letter-spacing:-0.386px;">143 291,52</span>
<span id="t117" class="t td" style="top:769.45px;line-height:20px;left:1391.00px;letter-spacing:-0.781px;">USD</span>
<span id="t118" class="t td" style="top:767.65px;line-height:20px;left:1534.50px;">-</span>
<div class="abs" style="left:471px;top:765px;width:1px;height:28px;background:#ebeff8"></div>
<div class="abs" style="left:614px;top:765px;width:1px;height:28px;background:#ebeff8"></div>
<div class="abs" style="left:756px;top:765px;width:1px;height:28px;background:#ebeff8"></div>
<div class="abs" style="left:899px;top:765px;width:1px;height:28px;background:#ebeff8"></div>
<div class="abs" style="left:1042px;top:765px;width:1px;height:28px;background:#ebeff8"></div>
<div class="abs" style="left:1237px;top:765px;width:1px;height:28px;background:#ebeff8"></div>
<div class="abs" style="left:1380px;top:765px;width:1px;height:28px;background:#ebeff8"></div>
<div class="abs" style="left:1523px;top:765px;width:1px;height:28px;background:#ebeff8"></div>
<div class="abs" style="left:1666px;top:765px;width:1px;height:28px;background:#ebeff8"></div>
<div class="abs" style="left:328px;top:793px;width:1338px;height:1px;background:#ebeff8"></div>
<div class="abs" style="left:1666px;top:793px;width:166px;height:1px;background:#ebeff8"></div>
<svg style="left:344.6px;top:805.6px" width="14" height="10" viewBox="0 0 14 10"><path d="M1.200 0.750h11.800L7.100 8.150z" fill="none" stroke="#000" stroke-width="1.200" stroke-linejoin="miter"/></svg>
<span id="t119" class="t gr" style="top:802.80px;line-height:20px;left:370.00px;letter-spacing:0.047px;">Компания CONSO - CONSO</span>
<div class="abs" style="left:328px;top:825px;width:1338px;height:1px;background:#dedede"></div>
<div class="abs" style="left:1666px;top:825px;width:166px;height:1px;background:#dedede"></div>
<svg style="left:374.6px;top:835.4px" width="10" height="15" viewBox="0 0 10 15"><path d="M0.800 1.300v11.400L8.300 7z" fill="none" stroke="#000" stroke-width="1.100"/></svg>
<span id="t120" class="t gr" style="top:835.80px;line-height:20px;left:392.00px;letter-spacing:0.177px;">Корректировка 1 от 03.04.2024 Стандартная - Обесценение ОС</span>
<svg style="left:1671.1px;top:836.0px" width="19" height="13" viewBox="0 0 19 13"><path d="M0 6.500C2.500 2.300 5.800 0 9.500 0s7 2.300 9.500 6.500C16.500 10.700 13.200 13 9.500 13S2.500 10.700 0 6.500z" fill="#000"/><circle cx="9.500" cy="6.500" r="4.600" fill="#fff"/><circle cx="9.500" cy="6.500" r="2.700" fill="#000"/></svg>
<svg style="left:1697.7px;top:832.6px" width="20" height="20" viewBox="0 0 20 20"><path d="M15.200 0.700L19.100 4.600 7.900 15.600 0.600 19 3.900 11.600z" fill="#fff" stroke="#000" stroke-width="1.100" stroke-linejoin="miter"/><path d="M13.300 2.600l3.900 3.900" stroke="#000" stroke-width="1"/><path d="M3.900 11.600l4 4" stroke="#000" stroke-width="1.400"/><path d="M0.600 19l0.900-2.100 1.200 1.200z" fill="#000" stroke="#000" stroke-width="0.500"/></svg>
<svg style="left:1727.0px;top:832.0px" width="17" height="20" viewBox="0 0 17 20"><path d="M6.100 2.500a2.300 1.800 0 0 1 4.600 0z" fill="#000"/><path d="M3 5.500v11.300a1.500 1.500 0 0 0 1.500 1.500h7.800a1.500 1.500 0 0 0 1.500-1.500V5.500" fill="#fff" stroke="#111" stroke-width="1.200"/><rect x="1" y="2.700" width="14.800" height="2.400" rx="1.200" fill="#d0d0d0" stroke="#222" stroke-width="1"/><path d="M5.500 7.800v7.900M8.500 7.800v7.900M11.500 7.800v7.900" stroke="#222" stroke-width="1"/></svg>
<div class="abs" style="left:1749.0px;top:834.2px;width:28px;height:16px;border-radius:8px;background:#2f7be0"></div>
<div class="abs" style="left:1763.5px;top:836.7px;width:11px;height:11px;border-radius:50%;background:#fff"></div>
<div class="abs" style="left:328px;top:858px;width:1338px;height:1px;background:#dedede"></div>
<div class="abs" style="left:1666px;top:858px;width:166px;height:1px;background:#ebeff8"></div>
<svg style="left:374.6px;top:868.4px" width="10" height="15" viewBox="0 0 10 15"><path d="M0.800 1.300v11.400L8.300 7z" fill="none" stroke="#000" stroke-width="1.100"/></svg>
<span id="t121" class="t gr" style="top:868.80px;line-height:20px;left:392.00px;letter-spacing:0.200px;">Корректировка 2 от 16.04.2024 Стандартная - Обесценение Запасов</span>
<svg style="left:1671.1px;top:869.0px" width="19" height="13" viewBox="0 0 19 13"><path d="M0 6.500C2.500 2.300 5.800 0 9.500 0s7 2.300 9.500 6.500C16.500 10.700 13.200 13 9.500 13S2.500 10.700 0 6.500z" fill="#000"/><circle cx="9.500" cy="6.500" r="4.600" fill="#fff"/><circle cx="9.500" cy="6.500" r="2.700" fill="#000"/></svg>
<svg style="left:1697.7px;top:865.6px" width="20" height="20" viewBox="0 0 20 20"><path d="M15.200 0.700L19.100 4.600 7.900 15.600 0.600 19 3.900 11.600z" fill="#fff" stroke="#000" stroke-width="1.100" stroke-linejoin="miter"/><path d="M13.300 2.600l3.900 3.900" stroke="#000" stroke-width="1"/><path d="M3.900 11.600l4 4" stroke="#000" stroke-width="1.400"/><path d="M0.600 19l0.900-2.100 1.200 1.200z" fill="#000" stroke="#000" stroke-width="0.500"/></svg>
<svg style="left:1727.0px;top:865.0px" width="17" height="20" viewBox="0 0 17 20"><path d="M6.100 2.500a2.300 1.800 0 0 1 4.600 0z" fill="#000"/><path d="M3 5.500v11.300a1.500 1.500 0 0 0 1.500 1.500h7.800a1.500 1.500 0 0 0 1.500-1.500V5.500" fill="#fff" stroke="#111" stroke-width="1.200"/><rect x="1" y="2.700" width="14.800" height="2.400" rx="1.200" fill="#d0d0d0" stroke="#222" stroke-width="1"/><path d="M5.500 7.800v7.900M8.500 7.800v7.900M11.500 7.800v7.900" stroke="#222" stroke-width="1"/></svg>
<div class="abs" style="left:1749.0px;top:867.2px;width:28px;height:16px;border-radius:8px;background:#2f7be0"></div>
<div class="abs" style="left:1763.5px;top:869.7px;width:11px;height:11px;border-radius:50%;background:#fff"></div>
<div class="abs" style="left:328px;top:891px;width:1338px;height:1px;background:#dedede"></div>
<div class="abs" style="left:1666px;top:891px;width:166px;height:1px;background:#ebeff8"></div>
</body></html>
